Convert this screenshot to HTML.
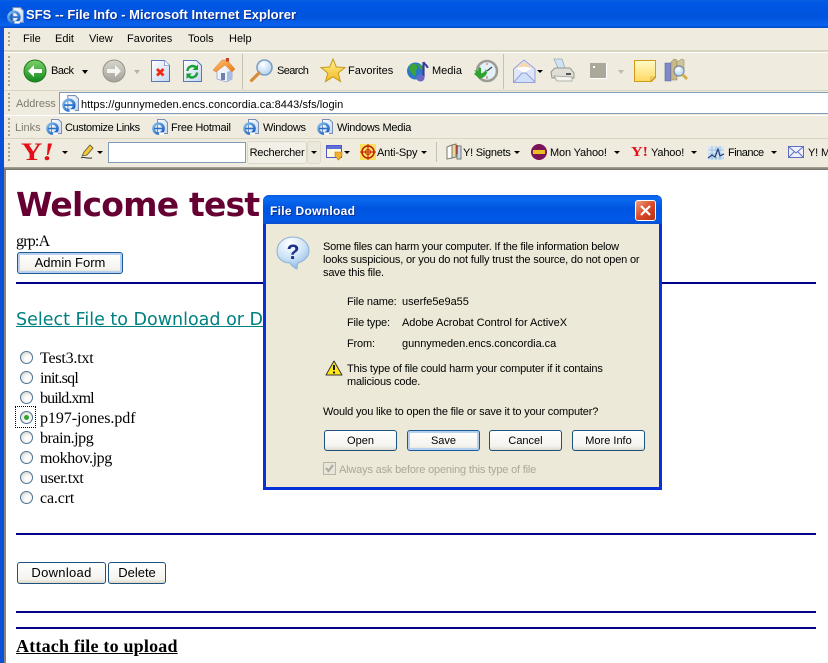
<!DOCTYPE html>
<html><head><meta charset="utf-8"><style>
html,body{margin:0;padding:0;width:828px;height:663px;overflow:hidden;background:#fff}
body{position:relative;font:11px "Liberation Sans",sans-serif;color:#000}
.a{position:absolute;white-space:nowrap}
.t{position:absolute;white-space:nowrap;line-height:14px;font-size:11px;letter-spacing:-.1px}
.m{letter-spacing:0}
.l{letter-spacing:-.27px}
.y{letter-spacing:-.15px}
.q{letter-spacing:-.18px}
.v{letter-spacing:-.04px}
.g{color:#7d7b6f}
svg{position:absolute;overflow:visible}
.h{position:absolute;height:2px;background:#00008b}
.s{position:absolute;font:16px/18px "Liberation Serif",serif;white-space:nowrap}
.r{position:absolute;left:20px;width:13px;height:13px;box-sizing:border-box;border:1px solid #4a7396;border-radius:50%;background:radial-gradient(circle at 65% 65%,#fff 25%,#d4d3ca 90%)}
.b{position:absolute;box-sizing:border-box;border:1px solid #1c5180;border-radius:3px;background:linear-gradient(#fff,#f4f3ee 80%,#dcd8ca);text-align:center;font-size:13px;line-height:20px;height:22px}
.d{position:absolute;box-sizing:border-box;border:1px solid #1c5180;border-radius:3px;background:linear-gradient(#fff,#f4f3ee 80%,#dcd8ca);text-align:center;font-size:11px;line-height:20px;width:73px;height:21px;top:430px}
.sep{position:absolute;width:1px;background:#c5c2b2}
.grip{position:absolute;left:8px;width:2px;background:repeating-linear-gradient(#a9a692 0 2px,transparent 2px 4px)}
.ar{position:absolute;border:3px solid transparent;border-top:3px solid #000;border-bottom:0}
</style></head><body>
<svg width="0" height="0" style="left:0;top:0"><defs>
<linearGradient id="ie" x1="0" y1="0" x2="1" y2="1"><stop offset="0" stop-color="#7fc0f0"/><stop offset="1" stop-color="#1458b8"/></linearGradient>
<linearGradient id="pg" x1="0" y1="0" x2="1" y2="1"><stop offset="0" stop-color="#fff"/><stop offset="1" stop-color="#c4d6f2"/></linearGradient>
<linearGradient id="gr" x1="0" y1="0" x2="0" y2="1"><stop offset="0" stop-color="#7fd06a"/><stop offset="1" stop-color="#12891c"/></linearGradient>
<linearGradient id="gy" x1="0" y1="0" x2="0" y2="1"><stop offset="0" stop-color="#d8d6cc"/><stop offset="1" stop-color="#a4a29a"/></linearGradient>
<linearGradient id="st" x1="0" y1="0" x2="0" y2="1"><stop offset="0" stop-color="#fff29a"/><stop offset="1" stop-color="#f4b820"/></linearGradient>
<linearGradient id="nt" x1="0" y1="0" x2="0" y2="1"><stop offset="0" stop-color="#fffbc8"/><stop offset="1" stop-color="#ffd860"/></linearGradient>
<linearGradient id="ro" x1="0" y1="0" x2="1" y2="1"><stop offset="0" stop-color="#ffc070"/><stop offset="1" stop-color="#e87818"/></linearGradient>
<radialGradient id="gl" cx=".4" cy=".3" r=".8"><stop offset="0" stop-color="#fff"/><stop offset="1" stop-color="#a8cdf0"/></radialGradient>
<radialGradient id="bub" cx=".4" cy=".2" r=".9"><stop offset="0" stop-color="#fff"/><stop offset=".5" stop-color="#cfe4f8"/><stop offset="1" stop-color="#7fb0e0"/></radialGradient>
<symbol id="e" viewBox="0 0 16 16"><path d="M5.500.5h7l3 3v11h-10z" fill="url(#pg)" stroke="#7b8db4"/><circle cx="6.500" cy="9.500" r="5" fill="none" stroke="url(#ie)" stroke-width="2.600"/><path d="M2 9.500h9" stroke="#2670cc" stroke-width="1.600"/><path d="M7 14.500h5" stroke="#fff" stroke-width="2.200"/></symbol>
</defs></svg>
<!-- page content -->
<div class="a" style="left:16px;top:184px;font:bold 33px/42px 'DejaVu Sans',sans-serif;color:#660033;letter-spacing:-.8px">Welcome test</div>
<div class="s" style="left:16px;top:233px;letter-spacing:-.8px">grp:A</div>
<div class="b" style="left:17px;top:252px;width:106px;border-color:#1c5a96;box-shadow:inset 0 0 0 2px #b8d0f0">Admin Form</div>
<div class="h" style="left:16px;top:282px;width:800px"></div>
<div class="a" style="left:16px;top:309px;font:17.5px/22px 'DejaVu Sans',sans-serif;color:#008080;text-decoration:underline">Select File to Download or D</div>
<div class="r" style="top:351px"></div><div class="s" style="left:40px;top:350px;letter-spacing:-.2px">Test3.txt</div>
<div class="r" style="top:371px"></div><div class="s" style="left:40px;top:370px;letter-spacing:-.75px">init.sql</div>
<div class="r" style="top:391px"></div><div class="s" style="left:40px;top:390px;letter-spacing:-.9px">build.xml</div>
<div class="a" style="left:15px;top:406px;width:21px;height:22px;box-sizing:border-box;border:1px dotted #000"></div>
<div class="r" style="top:411px"></div><div class="a" style="left:24px;top:415px;width:5px;height:5px;border-radius:50%;background:#2fa52f"></div><div class="s" style="left:40px;top:410px;letter-spacing:-.07px">p197-jones.pdf</div>
<div class="r" style="top:431px"></div><div class="s" style="left:40px;top:430px;letter-spacing:-.45px">brain.jpg</div>
<div class="r" style="top:451px"></div><div class="s" style="left:40px;top:450px;letter-spacing:-.4px">mokhov.jpg</div>
<div class="r" style="top:471px"></div><div class="s" style="left:40px;top:470px;letter-spacing:-.4px">user.txt</div>
<div class="r" style="top:491px"></div><div class="s" style="left:40px;top:490px;letter-spacing:-.15px">ca.crt</div>
<div class="h" style="left:16px;top:533px;width:800px"></div>
<div class="b" style="left:17px;top:562px;width:89px;letter-spacing:.3px">Download</div>
<div class="b" style="left:108px;top:562px;width:58px">Delete</div>
<div class="h" style="left:16px;top:611px;width:800px"></div>
<div class="h" style="left:16px;top:627px;width:800px"></div>
<div class="a" style="left:16px;top:636px;font:bold 18px/21px 'Liberation Serif',serif;text-decoration:underline;letter-spacing:.2px">Attach file to upload</div>

<!-- window chrome -->
<div class="a" style="left:0;top:0;width:828px;height:28px;background:linear-gradient(#0a5fe0 0,#0058e6 8%,#0053dc 60%,#0a63ee 90%,#0046c8)"></div>
<div class="a" style="left:0;top:28px;width:4px;height:635px;background:#0a50d8"></div>
<div class="a" style="left:4px;top:28px;width:2px;height:635px;background:#8a877a"></div>
<div class="a" style="left:4px;top:28px;width:824px;height:139px;background:#efecdf"></div>
<div class="a" style="left:4px;top:167px;width:824px;height:3px;background:linear-gradient(#aca899,#6f6d62)"></div>

<svg style="left:7px;top:7px" width="17" height="17"><use href="#e" width="17" height="17"/></svg>
<div class="a" style="left:26px;top:7px;font:bold 13px/16px 'Liberation Sans',sans-serif;color:#fff;letter-spacing:.03px;text-shadow:1px 1px #0a2f90">SFS -- File Info - Microsoft Internet Explorer</div>

<!-- menu -->
<div class="grip" style="top:32px;height:16px"></div>
<div class="t m" style="left:23px;top:32px">File</div><div class="t m" style="left:55px;top:32px">Edit</div><div class="t m" style="left:89px;top:32px">View</div><div class="t m" style="left:127px;top:32px">Favorites</div><div class="t m" style="left:188px;top:32px">Tools</div><div class="t m" style="left:229px;top:32px">Help</div>
<div class="a" style="left:4px;top:50px;width:824px;height:2px;background:#d8d4c2;border-bottom:1px solid #fff"></div>

<!-- toolbar -->
<div class="grip" style="top:56px;height:32px"></div>
<svg style="left:23px;top:59px" width="24" height="24" viewBox="0 0 24 24"><circle cx="12" cy="12" r="11" fill="url(#gr)" stroke="#1d7a1d"/><path d="M5 12l6-6v4h8v4h-8v4z" fill="#fff"/></svg>
<div class="t" style="left:51px;top:64px;letter-spacing:-.5px">Back</div>
<div class="ar" style="left:82px;top:70px;border-width:3.500px;border-top-width:4px;border-bottom:0"></div>
<svg style="left:102px;top:59px" width="24" height="24" viewBox="0 0 24 24"><circle cx="12" cy="12" r="11" fill="url(#gy)" stroke="#96948a"/><path d="M19 12l-6-6v4H5v4h8v4z" fill="#f4f4f0"/></svg>
<div class="ar" style="left:134px;top:70px;border-width:3.500px;border-top:4px solid #b5b2a4;border-bottom:0"></div>
<svg style="left:151px;top:60px" width="19" height="22" viewBox="0 0 19 22"><path d="M.5.5h13l5 5v16H.5z" fill="url(#pg)" stroke="#5677b8"/><path d="M13.500.5v5h5" fill="#fff" stroke="#5677b8" stroke-width=".6"/><path d="M6 9l6.500 6.500M12.500 9L6 15.500" stroke="#f02a10" stroke-width="2.800"/></svg>
<svg style="left:183px;top:60px" width="19" height="22" viewBox="0 0 19 22"><path d="M.5.5h13l5 5v16H.5z" fill="url(#pg)" stroke="#5677b8"/><path d="M4.500 11a5 5 0 0 1 8.500-3.500" fill="none" stroke="#18a030" stroke-width="2.400"/><path d="M15 4.500v5.500h-5.500z" fill="#18a030"/><path d="M14 12.500a5 5 0 0 1-8.500 3.500" fill="none" stroke="#18a030" stroke-width="2.400"/><path d="M3.500 19v-5.500H9z" fill="#18a030"/></svg>
<svg style="left:212px;top:58px" width="24" height="25" viewBox="0 0 24 25"><path d="M5 12l7-7 8 7.500V21l-5.500 3L5 21z" fill="#eef2fa" stroke="#8fa4cc" stroke-width=".8"/><path d="M15 14l5-2v9l-5 3z" fill="#a8bce0"/><rect x="9" y="15" width="4" height="7" fill="#6f80ae"/><path d="M1 12L10 2h5l8 9-3 3-7-7-9 7z" fill="url(#ro)" stroke="#d8802a" stroke-width=".5"/><rect x="14" y="0" width="3" height="3.500" fill="#c84028"/></svg>
<div class="sep" style="left:242px;top:54px;height:35px"></div>
<svg style="left:249px;top:59px" width="24" height="24" viewBox="0 0 24 24"><circle cx="15.500" cy="8.500" r="7.500" fill="url(#gl)" stroke="#7ba0c4" stroke-width="1.600"/><path d="M10 14L2.500 21.500" stroke="#d88a38" stroke-width="3.200" stroke-linecap="round"/></svg>
<div class="t" style="left:277px;top:64px;letter-spacing:-.6px">Search</div>
<svg style="left:320px;top:58px" width="26" height="25" viewBox="0 0 26 25"><path d="M13 1l3.300 8 8.700.5-6.800 5.500 2.300 8.500L13 18.800 5.500 23.500 7.800 15 1 9.500 9.700 9z" fill="url(#st)" stroke="#c49a14"/></svg>
<div class="t m" style="left:348px;top:64px">Favorites</div>
<svg style="left:406px;top:60px" width="23" height="23" viewBox="0 0 23 23"><circle cx="9.500" cy="11" r="8.500" fill="#2c78c8"/><path d="M3 6c3-3 7-3 8 0s-2 5-1 7-2 4-3 2-5-5-4-9zM12 4c2 0 5 2 5 6-2 0-5-3-5-6z" fill="#3ba33b"/><path d="M17.500 2v15" stroke="#3c3c98" stroke-width="2.200"/><path d="M17.500 2c1 3 4 3 4 6" fill="none" stroke="#3c3c98" stroke-width="2"/><ellipse cx="14.500" cy="18" rx="4" ry="3.500" fill="#6a68c8"/></svg>
<div class="t m" style="left:432px;top:64px">Media</div>
<svg style="left:473px;top:59px" width="25" height="24" viewBox="0 0 25 24"><circle cx="14" cy="12" r="10" fill="#e2f0f8" stroke="#9c9c96" stroke-width="2.500"/><path d="M14 12l5-4" stroke="#444" stroke-width="1.300"/><path d="M14 17v3M14 4v2" stroke="#e06050" stroke-width="1"/><path d="M1 11l4 1 1-4 2 1v9l-1 2-6-5 2-2z" fill="#2ea32e"/><path d="M5 13c2 2 6 2 8-3l1 4c-2 5-7 6-9 5z" fill="#2ea32e"/></svg>
<div class="sep" style="left:503px;top:54px;height:35px"></div>
<svg style="left:513px;top:59px" width="23" height="24" viewBox="0 0 23 24"><path d="M.5 10L11 1l11 9v13.500H.5z" fill="#dfe6fa" stroke="#9a9fd8"/><path d="M3 9l8-6 8 6-8 5z" fill="#fff"/><path d="M3 9l8-6 8 6-8-1.500z" fill="#f6d8a8"/><path d="M1 23l8-9h4l9 9" fill="#cfe0f8" stroke="#9a9fd8"/></svg>
<div class="ar" style="left:537px;top:70px"></div>
<svg style="left:551px;top:59px" width="24" height="24" viewBox="0 0 24 24"><path d="M3 0h8l3 9H7z" fill="#cfe2f6" stroke="#98aab8" stroke-width=".8"/><path d="M0 13l4-4h15l4 5v5H1z" fill="#dfdfd8" stroke="#96968e"/><path d="M3 17l3 5h15v-4z" fill="#f4f4f0" stroke="#a0a098" stroke-width=".8"/><rect x="15" y="14" width="5" height="2" fill="#555"/></svg>
<div class="a" style="left:590px;top:63px;width:17px;height:16px;box-sizing:border-box;background:#aca899;border:1px solid #fff;border-width:0 1px 1px 0"></div>
<div class="a" style="left:593px;top:66px;width:2px;height:2px;background:#fff"></div>
<div class="ar" style="left:618px;top:70px;border-width:3.500px;border-top:4px solid #bdbaac;border-bottom:0"></div>
<svg style="left:634px;top:60px" width="22" height="22" viewBox="0 0 22 22"><path d="M.5.5h21v17l-4 4H.5z" fill="url(#nt)" stroke="#d49a1c"/><path d="M21 17h-4v4z" fill="#f8e090" stroke="#c89018" stroke-width=".6"/></svg>
<svg style="left:665px;top:59px" width="24" height="23" viewBox="0 0 24 23"><path d="M0 4h6v18H0z" fill="#7f88c8" stroke="#5a62a4" stroke-width=".6"/><path d="M6 3l3-3 3 1v20H6z" fill="#c8b888" stroke="#8a8060" stroke-width=".5"/><path d="M12 3l5-3 2 1v10h-7z" fill="#d0c498" stroke="#8a8060" stroke-width=".5"/><circle cx="14" cy="12" r="5" fill="url(#gl)" stroke="#7a8aa0" stroke-width="1.200"/><path d="M17.500 15.500L22 20" stroke="#d4b040" stroke-width="2.800"/></svg>
<div class="a" style="left:4px;top:90px;width:824px;height:1px;background:#d8d4c2"></div>

<!-- address -->
<div class="grip" style="top:93px;height:19px"></div>
<div class="t g" style="left:16px;top:97px;letter-spacing:-.1px">Address</div>
<div class="a" style="left:59px;top:92px;width:770px;height:22px;box-sizing:border-box;background:#fff;border:1px solid #7f9db9"></div>
<svg style="left:62px;top:95px" width="17" height="17"><use href="#e" width="17" height="17"/></svg>
<div class="t" style="left:81px;top:98px;letter-spacing:.06px">https://gunnymeden.encs.concordia.ca:8443/sfs/login</div>
<div class="a" style="left:4px;top:115px;width:824px;height:1px;background:#fff"></div>

<!-- links -->
<div class="grip" style="top:118px;height:18px"></div>
<div class="t g" style="left:15px;top:121px;letter-spacing:0">Links</div>
<svg style="left:46px;top:119px" width="16" height="16"><use href="#e" width="16" height="16"/></svg>
<div class="t" style="left:65px;top:121px;letter-spacing:-.4px">Customize Links</div>
<svg style="left:152px;top:119px" width="16" height="16"><use href="#e" width="16" height="16"/></svg>
<div class="t l" style="left:171px;top:121px">Free Hotmail</div>
<svg style="left:243px;top:119px" width="16" height="16"><use href="#e" width="16" height="16"/></svg>
<div class="t l" style="left:263px;top:121px">Windows</div>
<svg style="left:317px;top:119px" width="16" height="16"><use href="#e" width="16" height="16"/></svg>
<div class="t l" style="left:337px;top:121px">Windows Media</div>
<div class="a" style="left:4px;top:138px;width:824px;height:1px;background:#d8d4c2"></div>

<!-- yahoo bar -->
<div class="grip" style="top:143px;height:20px"></div>
<div class="a" style="left:21px;top:140px;font:bold 25px/26px 'Liberation Serif',serif;color:#e3101a;transform:scaleX(1.180);transform-origin:0 0">Y<span style="font-style:italic">!</span></div>
<div class="ar" style="left:62px;top:151px"></div>
<svg style="left:80px;top:143px" width="16" height="17" viewBox="0 0 16 17"><path d="M2 13l2-4 6-7 3 3-6 7z" fill="#f4c830" stroke="#554" stroke-width=".8"/><path d="M1 15c3-2 4 1 11 0" fill="none" stroke="#333"/></svg>
<div class="ar" style="left:97px;top:151px"></div>
<div class="a" style="left:108px;top:142px;width:138px;height:21px;box-sizing:border-box;background:#fff;border:1px solid #7f9db9"></div>
<div class="a" style="left:247px;top:141px;width:60px;height:23px;box-sizing:border-box;border:1px solid #dcd9ca;border-radius:3px;background:#f2f0e6;line-height:22px;text-align:center;font-size:11px;letter-spacing:-.2px">Rechercher</div>
<div class="a" style="left:307px;top:141px;width:14px;height:23px;box-sizing:border-box;border:1px solid #dcd9ca;border-radius:3px;background:#ece9dc"></div>
<div class="ar" style="left:311px;top:151px"></div>
<svg style="left:326px;top:145px" width="18" height="16" viewBox="0 0 18 16"><rect x=".5" y=".5" width="15" height="12" fill="#fff8d8" stroke="#5058c8"/><rect x="1" y="1" width="14" height="3" fill="#5a70d8"/><path d="M9 7h7v4l-3.500 4L9 11z" fill="#f0b030" stroke="#b87810" stroke-width=".6"/></svg>
<div class="ar" style="left:344px;top:151px"></div>
<svg style="left:360px;top:144px" width="16" height="16" viewBox="0 0 16 16"><rect width="16" height="16" fill="#f7e15a"/><circle cx="8" cy="8" r="6" fill="none" stroke="#c01808" stroke-width="1.500"/><circle cx="8" cy="8" r="2.500" fill="none" stroke="#c01808"/><path d="M8 0v16M0 8h16" stroke="#c01808"/></svg>
<div class="t y" style="left:377px;top:146px">Anti-Spy</div>
<div class="ar" style="left:421px;top:151px"></div>
<div class="sep" style="left:436px;top:142px;height:20px"></div>
<svg style="left:446px;top:144px" width="16" height="16" viewBox="0 0 16 16"><path d="M1 3l5-2v13l-5 1z" fill="#fff" stroke="#7a7a70"/><path d="M6 1l4-1v13l-4 1z" fill="#e8d8a0" stroke="#7a7a70"/><path d="M11 2h4v13h-4z" fill="#c8d8f0" stroke="#7a7a70"/><path d="M11 1v9" stroke="#c03020" stroke-width="1.500"/></svg>
<div class="t" style="left:463px;top:146px;letter-spacing:-.25px">Y! Signets</div>
<div class="ar" style="left:514px;top:151px"></div>
<svg style="left:531px;top:144px" width="16" height="16" viewBox="0 0 16 16"><circle cx="8" cy="8" r="8" fill="#7b1458"/><rect x="2" y="6" width="12" height="4" fill="#e8c020"/></svg>
<div class="t y" style="left:550px;top:146px">Mon Yahoo!</div>
<div class="ar" style="left:614px;top:151px"></div>
<div class="a" style="left:631px;top:144px;font:bold 14px/17px 'Liberation Serif',serif;color:#e3101a;transform:scaleX(1.150);transform-origin:0 0">Y!</div>
<div class="t y" style="left:651px;top:146px">Yahoo!</div>
<div class="ar" style="left:691px;top:151px"></div>
<svg style="left:708px;top:146px" width="16" height="14" viewBox="0 0 16 14"><rect width="16" height="14" fill="#d8e8f4"/><path d="M0 4h16M0 8h16M0 12h16M4 0v14M8 0v14M12 0v14" stroke="#7aa4cc" stroke-width=".6"/><path d="M0 12l4-3 3 2 3-8 2 7 4-2" fill="none" stroke="#203c80" stroke-width="1.200"/></svg>
<div class="t" style="left:728px;top:146px;letter-spacing:-.5px">Finance</div>
<div class="ar" style="left:771px;top:151px"></div>
<svg style="left:788px;top:146px" width="16" height="12" viewBox="0 0 16 12"><rect x=".5" y=".5" width="15" height="11" fill="#eef2fc" stroke="#5a6cc8"/><path d="M1 1l7 6 7-6M1 11l5-5M15 11l-5-5" fill="none" stroke="#5a6cc8"/></svg>
<div class="t y" style="left:808px;top:146px">Y! M</div>

<!-- dialog -->
<div class="a" style="left:263px;top:195px;width:399px;height:295px;box-sizing:border-box;background:#0831d9;border-radius:6px 6px 0 0"></div>
<div class="a" style="left:263px;top:195px;width:399px;height:29px;border-radius:6px 6px 0 0;background:linear-gradient(#0a5ee0,#0a6af0 12%,#0055e0 45%,#0058e8 85%,#0a50d0)"></div>
<div class="a" style="left:266px;top:224px;width:393px;height:263px;background:#ece9d8"></div>
<div class="a" style="left:270px;top:204px;font:bold 12px/15px 'Liberation Sans',sans-serif;color:#fff;letter-spacing:.3px;text-shadow:1px 1px #0a2f90">File Download</div>
<div class="a" style="left:635px;top:200px;width:21px;height:21px;box-sizing:border-box;border:1px solid #fff;border-radius:3px;background:linear-gradient(135deg,#f0a080,#d8492a 50%,#b83010)"></div>
<svg style="left:640px;top:205px" width="11" height="11" viewBox="0 0 11 11"><path d="M1 1l9 9M10 1l-9 9" stroke="#fff" stroke-width="2.200"/></svg>
<svg style="left:276px;top:236px" width="34" height="34" viewBox="0 0 34 34"><path d="M17 1C8 1 1 7 1 15s6 12 13 12c1 2 4 5 7 6 0-2 0-4 1-6 6-2 11-6 11-12C33 7 26 1 17 1z" fill="url(#bub)" stroke="#8fb2d2"/><text x="17" y="23" text-anchor="middle" font-family="Liberation Sans,sans-serif" font-weight="bold" font-size="21" fill="#1a2f8c">?</text></svg>
<div class="t" style="left:323px;top:240px;letter-spacing:-.22px">Some files can harm your computer. If the file information below</div>
<div class="t q" style="left:323px;top:253px">looks suspicious, or you do not fully trust the source, do not open or</div>
<div class="t q" style="left:323px;top:266px">save this file.</div>
<div class="t q" style="left:347px;top:295px">File name:</div><div class="t v" style="left:402px;top:295px">userfe5e9a55</div>
<div class="t q" style="left:347px;top:316px">File type:</div><div class="t v" style="left:402px;top:316px">Adobe Acrobat Control for ActiveX</div>
<div class="t q" style="left:347px;top:337px">From:</div><div class="t v" style="left:402px;top:337px">gunnymeden.encs.concordia.ca</div>
<svg style="left:325px;top:360px" width="18" height="16" viewBox="0 0 18 16"><path d="M9 1l8 14H1z" fill="#ffe81a" stroke="#333" stroke-linejoin="round"/><path d="M9 5v5M9 11.500v2" stroke="#000" stroke-width="1.800"/></svg>
<div class="t q" style="left:347px;top:362px">This type of file could harm your computer if it contains</div>
<div class="t q" style="left:347px;top:375px">malicious code.</div>
<div class="t q" style="left:323px;top:405px">Would you like to open the file or save it to your computer?</div>
<div class="d" style="left:324px">Open</div>
<div class="d" style="left:407px;border-color:#1c5a96;box-shadow:inset 0 0 0 2px #b8d0f0">Save</div>
<div class="d" style="left:489px">Cancel</div>
<div class="d" style="left:572px">More Info</div>
<div class="a" style="left:323px;top:462px;width:13px;height:13px;box-sizing:border-box;border:1px solid #b8b5a5;background:#e8e6da"></div>
<svg style="left:325px;top:464px" width="9" height="9" viewBox="0 0 9 9"><path d="M1 4l2.500 3L8 1" fill="none" stroke="#aca899" stroke-width="2"/></svg>
<div class="t q" style="left:339px;top:463px;color:#aca899">Always ask before opening this type of file</div>
</body></html>
